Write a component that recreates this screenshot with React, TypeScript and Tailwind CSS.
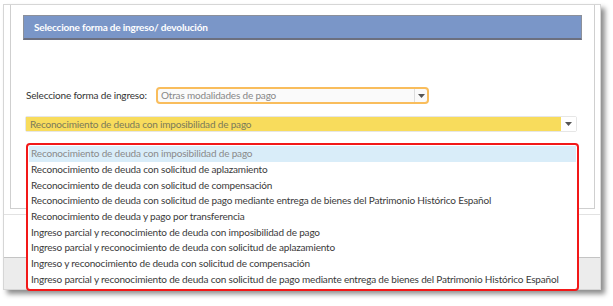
import React from "react";

const items = [
  "Reconocimiento de deuda con imposibilidad de pago",
  "Reconocimiento de deuda con solicitud de aplazamiento",
  "Reconocimiento de deuda con solicitud de compensación",
  "Reconocimiento de deuda con solicitud de pago mediante entrega de bienes del Patrimonio Histórico Español",
  "Reconocimiento de deuda y pago por transferencia",
  "Ingreso parcial y reconocimiento de deuda con imposibilidad de pago",
  "Ingreso parcial y reconocimiento de deuda con solicitud de aplazamiento",
  "Ingreso y reconocimiento de deuda con solicitud de compensación",
  "Ingreso parcial y reconocimiento de deuda con solicitud de pago mediante entrega de bienes del Patrimonio Histórico Español",
];

function Caret() {
  return (
    <svg width="7" height="4" viewBox="0 0 7 4">
      <path d="M0 0h7L3.5 4z" fill="#555" />
    </svg>
  );
}

export default function App() {
  return (
    <div
      className="relative w-[613px] h-[306px] bg-white overflow-hidden tracking-[-0.17px]"
      style={{ fontFamily: "Lato, 'Noto Sans', sans-serif" }}
    >
      <div className="absolute left-[3px] top-[4px] w-[598px] h-[286px] bg-white border border-[#d6d6d6] shadow-[4px_4px_5px_rgba(0,0,0,0.45)] flex flex-col">
        <div className="ml-[6px] mr-[5px] h-[204px] border-l border-r border-b border-[#cfcfcf] px-[12px] pt-[10px]">
          <div className="h-[25px] bg-[#7a96c8] border border-[#8c909a] border-b-2 border-b-[#6c7080] flex items-center pl-[10px]">
            <span className="text-white font-bold text-[10px]">
              Seleccione forma de ingreso/ devolución
            </span>
          </div>
          <div className="mt-[47px] flex items-center ml-[3px]">
            <span className="text-[10px] text-[#333] w-[130px] whitespace-nowrap">Seleccione forma de ingreso:</span>
            <div className="w-[273px] h-[17px] border-2 border-[#f9bd5c] rounded-[4px] bg-[#fafafa] flex items-center">
              <span className="flex-1 pl-[3px] text-[10px] text-[#888]">Otras modalidades de pago</span>
              <div className="w-[13px] h-full border-l border-[#ddd] flex items-center justify-center">
                <Caret />
              </div>
            </div>
          </div>
          <div className="mt-[12px] ml-[2px] w-[552px] h-[16px] flex border border-[#e6e6e6] rounded-[2px]">
            <div className="flex-1 bg-[#f8dc5c] flex items-center pl-[4px]">
              <span className="text-[10px] text-[#7a7a5a]">
                Reconocimiento de deuda con imposibilidad de pago
              </span>
            </div>
            <div className="w-[15px] bg-white flex items-center justify-center">
              <Caret />
            </div>
          </div>
        </div>
        <div className="h-[5px]" />
        <div className="border-t border-[#e2e2e2] h-[43px]" />
        <div className="flex-1 bg-[#ececec] border-t border-[#c4c4c4]" />
      </div>
      <div className="absolute left-[26px] top-[143px] w-[553px] h-[148px] bg-white border-2 border-[#f21818] rounded-[4px] pt-[1px] px-[1px]">
        {items.map((t, i) => (
          <div
            key={i}
            className={
              "h-[15.7px] flex items-center pl-[2px] text-[10px] whitespace-nowrap " +
              (i === 0 ? "bg-[#d9edf9] text-[#8a8a8a]" : "text-[#3a3a3a]")
            }
          >
            {t}
          </div>
        ))}
      </div>
    </div>
  );
}
